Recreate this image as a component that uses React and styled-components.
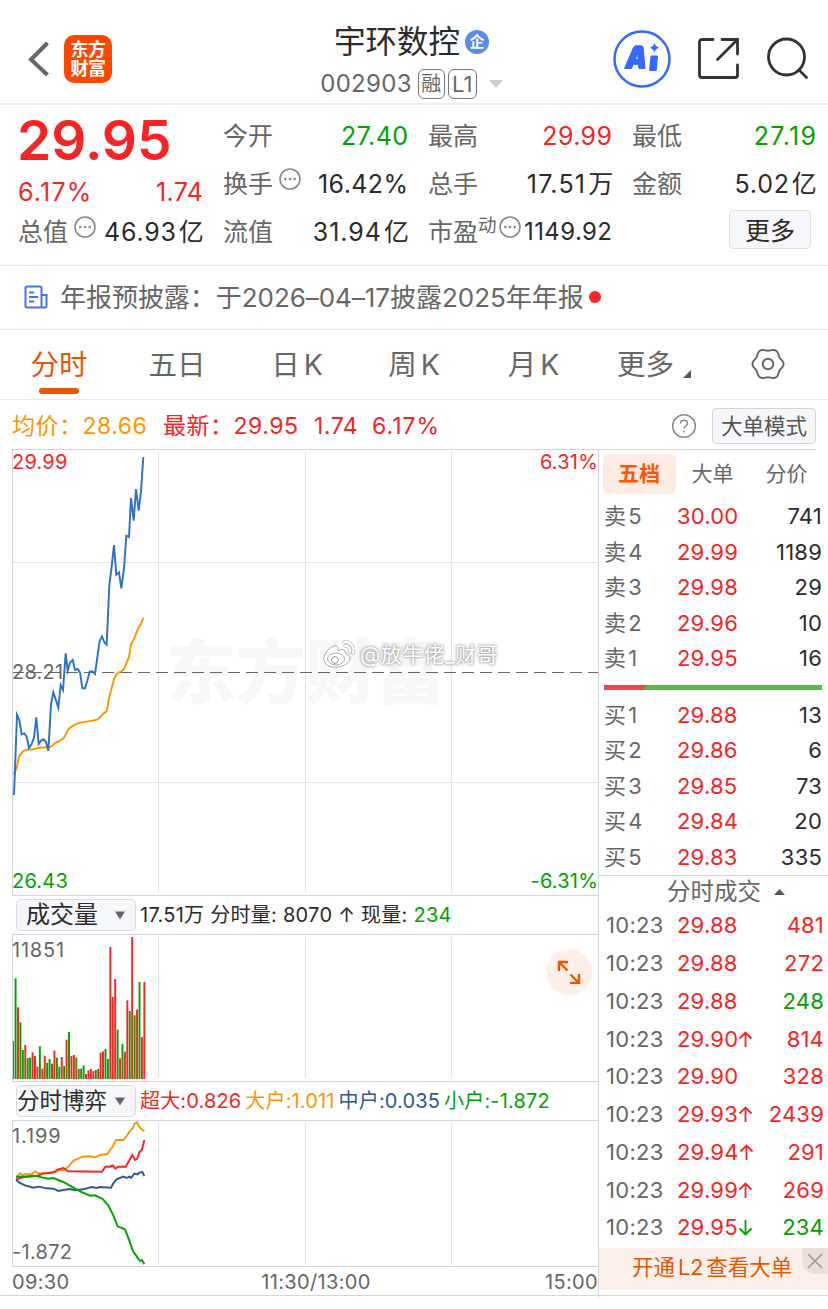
import React from 'react';
import styled, { createGlobalStyle } from 'styled-components';

const RED = '#f82323';
const GREEN = '#00a300';
const ORANGE = '#ff9500';
const BLUE = '#2f5597';
const BRAND = '#ea5504';
const GREY = '#666';
const DARK = '#2b2b2b';
const LINE = '#d3d5da';

const GlobalStyle = createGlobalStyle`
    * {
        box-sizing: border-box;
    }
    body {
        margin: 0;
        background: #fff;
        color: ${DARK};
        font-family: Inter, "Noto Sans CJK SC", sans-serif;
        font-weight: 400;
    }
`;

const Screen = styled.div`
    width: 828px;
    height: 1309px;
    overflow: hidden;
    background: #fff;
    white-space: nowrap;
`;

/* ---------- header ---------- */

const Header = styled.header`
    display: grid;
    grid-template-columns: 250px 1fr 250px;
    height: 105px;
    border-bottom: 2px solid #ededed;
`;

const HeaderLeft = styled.div`
    display: flex;
    align-items: center;
    gap: 13px;
    padding: 14px 0 0 28px;
`;

const Logo = styled.div`
    width: 48px;
    height: 48px;
    padding-top: 5px;
    border-radius: 10px;
    background: #ff4700;
    color: #fff;
    font-size: 18px;
    font-weight: 700;
    line-height: 19px;
    text-align: center;
    letter-spacing: -0.4px;
`;

const HeaderTitle = styled.div`
    display: flex;
    flex-direction: column;
    align-items: center;
    padding: 22px 5px 0 0;
`;

const NameRow = styled.div`
    display: flex;
    align-items: center;
    height: 40px;
    gap: 5px;
    font-size: 31.5px;
    line-height: 40px;
`;

const Certified = styled.span`
    width: 24px;
    height: 24px;
    border-radius: 50%;
    background: #5b8bea;
    color: #fff;
    font-size: 15px;
    font-weight: 700;
    line-height: 23px;
    text-align: center;
`;

const CodeRow = styled.div`
    display: flex;
    align-items: center;
    height: 31px;
    margin-top: 6px;
    color: ${GREY};
    font-size: 24px;
    letter-spacing: 0.3px;
`;

const Tag = styled.span`
    width: ${props => props.$width}px;
    height: 30px;
    margin-left: ${props => props.$gap}px;
    border: 1px solid #777;
    border-radius: 6px;
    font-size: ${props => props.$size}px;
    line-height: 29px;
    letter-spacing: 0;
    text-align: center;
`;

const HeaderRight = styled.div`
    display: flex;
    align-items: center;
    padding: 14px 0 0 35px;
`;

/* ---------- quote ---------- */

const Quote = styled.section`
    display: grid;
    grid-template-columns: 185px 185px 184px 184px;
    column-gap: 20px;
    height: 161px;
    padding: 7px 0 0 18px;
    border-bottom: 1px solid #e8e8e8;
`;

const QuoteColumn = styled.div`
    display: flex;
    flex-direction: column;
`;

const QuoteRow = styled.div`
    display: flex;
    align-items: center;
    justify-content: space-between;
    height: 48px;
    color: ${props => props.$color || DARK};
    font-size: 25px;
    line-height: 48px;
`;

const Value = styled.span`
    margin-right: -${props => props.$spacing || 0.4}px;
    font-size: ${props => props.$size || 25}px;
    letter-spacing: ${props => props.$spacing || 0.4}px;
`;

const Unit = styled.span`
    margin-left: 2px;
    letter-spacing: 0;
`;

const Price = styled.div`
    height: 62px;
    margin-left: -1px;
    color: ${RED};
    font-size: 55px;
    font-weight: 600;
    line-height: 56px;
`;

const Change = styled(QuoteRow)`
    height: 34px;
    padding-top: 1px;
    line-height: 34px;
`;

const Label = styled.span`
    display: flex;
    color: ${GREY};
`;

const Sup = styled.sup`
    font-size: 18.5px;
    line-height: 34px;
`;

const MoreButton = styled.div`
    align-self: flex-end;
    width: 82px;
    height: 39px;
    margin: 2px 5px 0 0;
    border: 1px solid #dcdfe6;
    border-radius: 4px;
    background: #f6f7fa;
    font-size: 25px;
    line-height: 40px;
    text-align: center;
`;

/* ---------- notice ---------- */

const Notice = styled.section`
    display: flex;
    align-items: center;
    height: 64px;
    padding-left: 24px;
    border-bottom: 1px solid #e8e8e8;
    color: ${GREY};
    font-size: 26px;
    line-height: 62px;
`;

const NoticeText = styled.span`
    margin-left: 12px;
    letter-spacing: -0.04px;
`;

const Dot = styled.i`
    width: 12px;
    height: 12px;
    margin: -1px 0 0 5px;
    border-radius: 50%;
    background: ${RED};
`;

/* ---------- period tabs ---------- */

const Tabs = styled.nav`
    display: flex;
    height: 70px;
    border-bottom: 1px solid #e8e8e8;
`;

const Tab = styled.div`
    display: flex;
    flex-direction: column;
    align-items: center;
    width: ${props => props.$width}px;
    padding-top: 15px;
    color: ${props => (props.$active ? BRAND : GREY)};
    font-size: 28.5px;
    line-height: 40px;
    word-spacing: -4px;

    &::after {
        content: '';
        display: ${props => (props.$active ? 'block' : 'none')};
        width: 40px;
        height: 6px;
        margin-top: 3px;
        border-radius: 3px;
        background: ${BRAND};
    }
`;

const TabMore = styled.span`
    display: flex;
    align-items: flex-end;
    gap: 9px;
`;

/* ---------- legend ---------- */

const Legend = styled.section`
    display: flex;
    align-items: center;
    height: 49px;
    padding: 2px 12px 0;
    font-size: 23px;
    line-height: 46px;
    letter-spacing: 0.5px;
`;

const LegendItem = styled.span`
    width: ${props => props.$width}px;
    color: ${props => props.$color};
    letter-spacing: ${props => props.$spacing || 0.5}px;
`;

const ModeButton = styled.span`
    width: 104px;
    height: 36px;
    margin-left: 15px;
    border: 1px solid #cfd3de;
    border-radius: 4px;
    background: #f6f7fa;
    color: #555;
    font-size: 21.5px;
    line-height: 34px;
    letter-spacing: 0;
    text-align: center;
`;

/* ---------- body ---------- */

const Body = styled.main`
    display: grid;
    grid-template-columns: 599px 229px;
    height: 847px;
    border-bottom: 1px solid ${LINE};
`;

const Charts = styled.div`
    padding-left: 12px;
    border-right: 1px solid ${LINE};
`;

const Panel = styled.div`
    position: relative;
    height: ${props => props.$height}px;
    border-top: 1px solid ${LINE};
    border-bottom: 1px solid ${LINE};
    border-left: 1px solid ${LINE};

    svg {
        display: block;
    }
`;

const ChartLabel = styled.span`
    position: absolute;
    ${props => (props.$right ? 'right: 0;' : 'left: -1px;')}
    top: ${props => props.$top}px;
    color: ${props => props.$color || GREY};
    font-size: 20px;
    line-height: 24px;
    letter-spacing: ${props => props.$spacing || 0.2}px;
`;

const Indicator = styled.div`
    display: flex;
    align-items: center;
    height: 38px;
    padding-left: 4px;
    font-size: 20px;
    line-height: 36px;
    letter-spacing: ${props => props.$spacing}px;
`;

const Select = styled.div`
    display: flex;
    align-items: center;
    justify-content: space-between;
    width: 120px;
    height: 32px;
    margin-right: 4px;
    padding: 0 10px 0 ${props => props.$pad}px;
    border: 1px solid #d9dce4;
    border-radius: 4px;
    background: #f6f7fa;
    font-size: ${props => props.$size}px;
    line-height: 32px;
    letter-spacing: 0;
`;

const Colored = styled.span`
    color: ${props => props.$color};
    margin-right: ${props => props.$gap || 0}px;
`;

const Expand = styled.div`
    position: absolute;
    top: 14px;
    right: 6px;
    display: flex;
    align-items: center;
    justify-content: center;
    width: 46px;
    height: 46px;
    border-radius: 50%;
    background: #fef0e9;
`;

const TimeAxis = styled.div`
    display: grid;
    grid-template-columns: 1fr auto 1fr;
    align-items: center;
    height: 30px;
    color: ${GREY};
    font-size: 20px;
    letter-spacing: 0.35px;

    span:nth-child(2) {
        margin-left: 22px;
    }
    span:last-child {
        text-align: right;
    }
`;

const Watermark = styled.div`
    position: absolute;
    top: 185px;
    left: 309px;
    display: flex;
    align-items: center;
    gap: 2px;
    color: #fff;
    font-size: 21px;
    line-height: 40px;
    letter-spacing: 0.5px;
    text-shadow: 0 0 2px #999, 0 0 3px #aaa, 0 0 4px #ccc;
`;

/* ---------- order book ---------- */

const Side = styled.aside`
    display: flex;
    flex-direction: column;
`;

const BookTabs = styled.div`
    display: flex;
    height: 50px;
    padding: 4px 0 0 4px;
    border-top: 1px solid ${LINE};
    margin-right: 12px;
`;

const BookTab = styled.div`
    flex: none;
    width: ${props => (props.$active ? 73 : 74)}px;
    height: 40px;
    border-radius: 6px;
    background: ${props => (props.$active ? '#feece3' : 'none')};
    color: ${props => (props.$active ? '#ff5500' : GREY)};
    font-size: 21px;
    font-weight: ${props => (props.$active ? 700 : 400)};
    line-height: 40px;
    text-align: center;
    text-indent: -1px;
`;

const BookRow = styled.div`
    display: grid;
    grid-template-columns: 73px 1fr auto;
    align-items: center;
    height: 35.5px;
    padding: 0 6px 0 5px;
    font-size: 22px;
    letter-spacing: 0.2px;
    line-height: 35px;
`;

const Level = styled.span`
    color: ${GREY};
    word-spacing: -4px;
    letter-spacing: ${props => props.$spacing || 0}px;
`;

const Ratio = styled.div`
    flex: none;
    height: 5px;
    margin: 8px 6px 8px 5px;
    background: linear-gradient(125deg, #ee4848 0 35px, #5bb946 35px);
`;

const DealsTitle = styled.div`
    display: flex;
    align-items: center;
    gap: 13px;
    height: 32px;
    padding-left: 68px;
    border-top: 1px solid ${LINE};
    color: ${GREY};
    font-size: 23.5px;
    line-height: 32px;
`;

const DealRow = styled(BookRow)`
    height: 37.75px;
    padding: 0 4px 0 7px;
    grid-template-columns: 71px 1fr auto;
`;

const Banner = styled.div`
    display: flex;
    justify-content: space-between;
    height: 42px;
    margin-top: 1px;
    padding-left: 33px;
    background: #fdf0ea;
    color: ${BRAND};
    font-size: 21.5px;
    line-height: 39px;
    word-spacing: -3px;
`;

const Close = styled.span`
    display: flex;
    align-items: center;
    justify-content: center;
    width: 26px;
    height: 26px;
    border-bottom-left-radius: 13px;
    background: #ecdfda;
`;

const volumes = [
    ['g', 453], ['g', 265], ['r', 352], ['g', 397], ['g', 480], ['r', 465], ['g', 504], ['g', 503], ['r', 487],
    ['r', 498], ['r', 530], ['g', 469], ['r', 536], ['r', 497], ['g', 519], ['g', 507], ['r', 521], ['r', 482],
    ['g', 503], ['g', 530], ['r', 501], ['g', 528], ['r', 449], ['g', 426], ['r', 498], ['r', 495], ['g', 503],
    ['r', 537], ['g', 536], ['g', 526], ['r', 552], ['r', 541], ['r', 537], ['r', 543], ['g', 540], ['r', 537],
    ['r', 488], ['r', 484], ['g', 477], ['g', 507], ['r', 171], ['r', 321], ['r', 267], ['g', 419], ['r', 505],
    ['g', 462], ['r', 485], ['r', 331], ['g', 363], ['r', 141], ['g', 376], ['r', 359], ['g', 276], ['r', 441],
    ['r', 276],
];

const sells = [
    ['卖 5', '30.00', 741], ['卖 4', '29.99', 1189], ['卖 3', '29.98', 29], ['卖 2', '29.96', 10], ['卖 1', '29.95', 16],
];

const buys = [
    ['买 1', '29.88', 13], ['买 2', '29.86', 6], ['买 3', '29.85', 73], ['买 4', '29.84', 20], ['买 5', '29.83', 335],
];

const deals = [
    ['29.88', '', 481, RED],
    ['29.88', '', 272, RED],
    ['29.88', '', 248, GREEN],
    ['29.90', 'up', 814, RED],
    ['29.90', '', 328, RED],
    ['29.93', 'up', 2439, RED],
    ['29.94', 'up', 291, RED],
    ['29.99', 'up', 269, RED],
    ['29.95', 'down', 234, GREEN],
];

const pricePoints = '42,1065 45,990 51,824 58,840 65,883 73,880 80,890 87,924 95,912 102,893 109,832 116,912 123,902 130,898 138,906 145,932 153,793 160,757 167,778 175,803 182,735 189,750 197,640 203,692 210,668 218,660 225,690 233,687 240,697 247,745 255,745 262,722 269,695 277,694 285,702 292,652 299,603 306,589 313,607 320,614 328,435 335,380 342,315 349,404 357,397 364,445 372,385 379,287 387,291 393,174 401,242 408,147 416,212 423,155 430,51';
const averagePoints = '40,1003 47,990 51,980 57,950 65,938 73,931 80,929 100,928 115,924 145,921 153,920 165,909 175,905 182,900 190,895 197,884 204,869 212,862 225,853 240,848 265,844 292,839 300,831 310,821 320,814 327,775 335,743 343,714 349,704 357,697 365,693 372,687 379,670 387,651 393,614 401,598 408,582 416,561 423,553 430,533';

const flows = [
    [ORANGE, '48,290 55,287 61,280 68,287 75,283 95,283 105,274 115,280 150,279 165,276 175,271 190,270 203,262 213,250 222,241 235,236 248,230 270,229 285,232 300,225 322,222 330,210 338,200 348,180 370,180 380,168 390,153 398,145 404,131 411,127 418,140 426,149 433,153'],
    [RED, '48,298 60,294 80,290 110,288 130,281 160,277 175,268 190,264 204,274 306,275 316,260 330,260 338,256 346,266 355,260 377,260 385,246 390,238 397,225 405,240 412,236 418,217 426,209 433,180'],
    [BLUE, '48,299 58,308 75,316 100,323 115,320 140,325 160,326 175,333 190,330 210,327 225,331 250,328 275,321 290,324 300,321 333,323 340,310 350,298 370,290 380,294 388,290 393,294 403,281 412,283 418,278 427,276 433,288'],
    [GREEN, '48,290 75,290 100,287 115,290 145,296 160,294 190,306 215,320 240,334 270,347 285,346 308,357 325,377 340,406 353,439 375,448 390,487 398,512 412,532 420,543 426,540 433,553'],
];

// outline of the settings gear, six soft lobes
const gearPoints = Array.from({ length: 72 }, (_, i) => {
    const a = (i * Math.PI) / 36;
    const r = 14.4 + 1.15 * Math.cos(6 * a);
    return `${(17 + r * Math.cos(a)).toFixed(2)},${(16 + r * Math.sin(a)).toFixed(2)}`;
}).join(' ');

const Hint = ({ shift }) => (
    <svg width="22" height="22" viewBox="0 0 22 22" style={{ marginTop: 8, marginLeft: shift }}>
        <circle cx="11" cy="11" r="10" fill="none" stroke="#888" strokeWidth="1.6" />
        <circle cx="6.3" cy="11" r="1.3" fill="#888" />
        <circle cx="11" cy="11" r="1.3" fill="#888" />
        <circle cx="15.7" cy="11" r="1.3" fill="#888" />
    </svg>
);

const Grid = ({ height }) => (
    <g stroke="#e1e2ec" strokeWidth="1">
        {[145.5, 292.5, 438.5].map(x => <line key={x} x1={x} x2={x} y1="2" y2={height - 3} />)}
    </g>
);

const Caret = () => (
    <svg width="10" height="9" viewBox="0 0 10 9"><path d="M0 0.5h10L5 8.5z" fill="#666" /></svg>
);

const Arrow = ({ down }) => (
    <svg width="15" height="17" viewBox="0 0 15 17" fill="none" stroke={down ? GREEN : RED} strokeWidth="1.8" style={{ verticalAlign: -1 }}>
        <path d={down ? 'M7.5 1v14M1.5 9.5l6 6 6-6' : 'M7.5 16V2M1.5 7.5l6-6 6 6'} />
    </svg>
);

const Lines = styled.svg`
    position: absolute;
    top: 0;
    left: 0;
`;

const TopBar = () => (
    <Header>
        <HeaderLeft>
            <svg width="23" height="36" viewBox="0 0 23 36" fill="none" stroke="#666" strokeWidth="4">
                <path d="M19.500 2L3 18.500 19.500 34" />
            </svg>
            <Logo>东方<br />财富</Logo>
        </HeaderLeft>
        <HeaderTitle>
            <NameRow>宇环数控<Certified>企</Certified></NameRow>
            <CodeRow>
                002903
                <Tag $width={27} $gap={6} $size={20}>融</Tag>
                <Tag $width={29} $gap={3} $size={22}>L1</Tag>
                <svg width="14" height="8" viewBox="0 0 14 8" style={{ marginLeft: 12 }}><path d="M0 0h14L7 8z" fill="#ccc" /></svg>
            </CodeRow>
        </HeaderTitle>
        <HeaderRight>
            <svg width="58" height="58" viewBox="0 0 58 58" fill="#3568ff">
                <circle cx="29" cy="29" r="27.500" fill="none" stroke="#3568ff" strokeWidth="2.500" />
                <g stroke="#3568ff" strokeLinejoin="round">
                    <path
                        d="M11.500 38.500L20.500 17.500q.8-1.700 2.500-1.700h5q2 0 2.200 2L32 38.500h-6l-.4-4.200h-5.400l-1.700 4.200zM22.300 29.300h2.900l-.5-6z"
                        fillRule="evenodd"
                        strokeWidth="1"
                    />
                    <path d="M38.500 26.500h5.500l-1.200 13.500h-5.800z" strokeWidth="2" />
                </g>
                <path d="M41.500 13q1 3.700 4.700 4.700-3.700 1-4.700 4.700-1-3.700-4.700-4.700 3.700-1 4.700-4.700z" />
            </svg>
            <svg width="41" height="41" viewBox="0 0 41 41" fill="none" stroke="#333" strokeWidth="2.800" strokeLinecap="round" style={{ marginLeft: 27 }}>
                <path d="M15 1.500H4a2.500 2.500 0 0 0-2.500 2.500v33A2.500 2.500 0 0 0 4 39.500h33a2.500 2.500 0 0 0 2.500-2.500V27M24 1.500h15.500V16M39 2L19.500 21.500" />
            </svg>
            <svg width="43" height="43" viewBox="0 0 43 43" fill="none" stroke="#333" strokeWidth="2.800" strokeLinecap="round" style={{ marginLeft: 27 }}>
                <circle cx="20.500" cy="20" r="18" />
                <path d="M33 33l7.500 7.500" />
            </svg>
        </HeaderRight>
    </Header>
);

const QuoteBoard = () => (
    <Quote>
        <QuoteColumn>
            <Price>29.95</Price>
            <Change $color={RED}><Value $spacing={1.2}>6.17%</Value><Value>1.74</Value></Change>
            <QuoteRow><Label>总值<Hint shift={6} /></Label><Value $spacing={0.8}>46.93<Unit>亿</Unit></Value></QuoteRow>
        </QuoteColumn>
        <QuoteColumn>
            <QuoteRow $color={GREEN}><Label>今开</Label><Value>27.40</Value></QuoteRow>
            <QuoteRow><Label>换手<Hint shift={6} /></Label><Value>16.42%</Value></QuoteRow>
            <QuoteRow><Label>流值</Label><Value $spacing={1}>31.94<Unit>亿</Unit></Value></QuoteRow>
        </QuoteColumn>
        <QuoteColumn>
            <QuoteRow $color={RED}><Label>最高</Label><Value>29.99</Value></QuoteRow>
            <QuoteRow><Label>总手</Label><Value $spacing={1.2}>17.51<Unit>万</Unit></Value></QuoteRow>
            <QuoteRow><Label>市盈<Sup>动</Sup><Hint shift={2} /></Label><Value $size={24}>1149.92</Value></QuoteRow>
        </QuoteColumn>
        <QuoteColumn>
            <QuoteRow $color={GREEN}><Label>最低</Label><Value $spacing={1.3}>27.19</Value></QuoteRow>
            <QuoteRow><Label>金额</Label><Value $spacing={0.8}>5.02<Unit>亿</Unit></Value></QuoteRow>
            <MoreButton>更多</MoreButton>
        </QuoteColumn>
    </Quote>
);

const PeriodTabs = () => (
    <Tabs>
        <Tab $width={118} $active>分时</Tab>
        <Tab $width={118}>五日</Tab>
        <Tab $width={122}>日 K</Tab>
        <Tab $width={112}>周 K</Tab>
        <Tab $width={127}>月 K</Tab>
        <Tab $width={114}>
            <TabMore>
                更多
                <svg width="8" height="8" viewBox="0 0 8 8" style={{ marginBottom: 7 }}><path d="M8 0v8H0z" fill="#555" /></svg>
            </TabMore>
        </Tab>
        <Tab $width={114}>
            <svg width="34" height="32" viewBox="0 0 34 32" fill="none" stroke="#666" strokeWidth="1.900" strokeLinejoin="round" style={{ marginTop: 3 }}>
                <polygon points={gearPoints} />
                <circle cx="17" cy="16" r="5.300" />
            </svg>
        </Tab>
    </Tabs>
);

const PriceChart = () => (
    <Panel $height={447}>
        <svg width="585" height="445" viewBox="0 0 585 445">
            <text x="153" y="248" fontSize="70" fontWeight="900" fill="#f7f7f7">东方财富</text>
            <Grid height={445} />
            <g stroke="#e1e2ec">
                <line x1="0" x2="585" y1="112.500" y2="112.500" />
                <line x1="0" x2="585" y1="332.500" y2="332.500" />
            </g>
            <line x1="-1" x2="585" y1="222.500" y2="222.500" stroke="#666" strokeDasharray="12 6" />
        </svg>
        <ChartLabel $top={0} $color={RED}>29.99</ChartLabel>
        <ChartLabel $top={0} $color={RED} $right>6.31%</ChartLabel>
        <ChartLabel $top={210}>28.21</ChartLabel>
        <ChartLabel $top={419} $color={GREEN}>26.43</ChartLabel>
        <ChartLabel $top={419} $color={GREEN} $right>-6.31%</ChartLabel>
        <Lines width="585" height="445" viewBox="0 0 585 445">
            <g transform="translate(-13 -10) scale(0.33333)" fill="none" strokeWidth="5.800">
                <polyline points={averagePoints} stroke={ORANGE} />
                <polyline points={pricePoints} stroke="#2e72c4" strokeMiterlimit="6" />
            </g>
        </Lines>
        <Watermark>
            <svg width="36" height="32" viewBox="0 0 36 32" fill="none" stroke="#aaa" strokeWidth="1">
                <path d="M12 7C6 9 1 16 2 21c1 6 8 8 14 7 7-1 12-5 12-9 0-3-3-4-5-5 1-3-2-5-7-2 1-4-1-6-4-5z" fill="#fff" />
                <ellipse cx="14" cy="20" rx="8.500" ry="6" fill="#fff" />
                <circle cx="13" cy="21" r="3.500" stroke="#999" />
                <path d="M22 3c6-1 11 5 9 11M23 7c4 0 6 3 5 6" stroke="#bbb" strokeWidth="3.500" strokeLinecap="round" />
                <path d="M22 3c6-1 11 5 9 11M23 7c4 0 6 3 5 6" stroke="#fff" strokeWidth="2" strokeLinecap="round" />
            </svg>
            @放牛佬_财哥
        </Watermark>
    </Panel>
);

const VolumeChart = () => (
    <Panel $height={148}>
        <svg width="585" height="146" viewBox="0 0 585 146">
            <Grid height={146} />
            <g transform="translate(-13 -45) scale(0.33333)">
                {volumes.map(([type, top], i) => (
                    <rect
                        key={i}
                        x={i === 0 ? 39 : 36.5 + i * 7.29}
                        y={top}
                        width={i === 0 ? 3 : 5.8}
                        height={567 - top}
                        fill={type === 'r' ? RED : GREEN}
                    />
                ))}
            </g>
        </svg>
        <ChartLabel $top={3} $spacing={0.8}>11851</ChartLabel>
        <Expand>
            <svg width="24" height="24" viewBox="0 0 24 24" fill="none" stroke={BRAND} strokeWidth="2.400">
                <path d="M2 11V2h9M2.500 2.500l8 8M22 14v9h-9M21.500 22.500l-8-8" />
            </svg>
        </Expand>
    </Panel>
);

const FlowChart = () => (
    <Panel $height={147}>
        <svg width="585" height="145" viewBox="0 0 585 145">
            <Grid height={147} />
        </svg>
        <ChartLabel $top={3} $spacing={0.9}>1.199</ChartLabel>
        <ChartLabel $top={119} $spacing={0.3}>-1.872</ChartLabel>
        <Lines width="585" height="145" viewBox="0 0 585 145">
            <g transform="translate(-13 -41) scale(0.33333)" fill="none" strokeWidth="5.800">
                {flows.map(([color, points]) => <polyline key={color} points={points} stroke={color} />)}
            </g>
        </Lines>
    </Panel>
);

const OrderBook = () => (
    <Side>
        <BookTabs>
            <BookTab $active>五档</BookTab>
            <BookTab>大单</BookTab>
            <BookTab>分价</BookTab>
        </BookTabs>
        {sells.map(([level, price, amount]) => (
            <BookRow key={level}><Level>{level}</Level><Colored $color={RED}>{price}</Colored><span>{amount}</span></BookRow>
        ))}
        <Ratio />
        {buys.map(([level, price, amount]) => (
            <BookRow key={level}><Level>{level}</Level><Colored $color={RED}>{price}</Colored><span>{amount}</span></BookRow>
        ))}
        <DealsTitle>
            分时成交
            <svg width="11" height="6" viewBox="0 0 11 6"><path d="M5.500 0L11 6H0z" fill="#555" /></svg>
        </DealsTitle>
        {deals.map(([price, trend, amount, color], i) => (
            <DealRow key={i}>
                <Level $spacing={0.3}>10:23</Level>
                <Colored $color={RED}>{price}{trend && <Arrow down={trend === 'down'} />}</Colored>
                <Colored $color={color}>{amount}</Colored>
            </DealRow>
        ))}
        <Banner>
            开通 L2 查看大单
            <Close>
                <svg width="16" height="16" viewBox="0 0 16 16" stroke="#999" strokeWidth="1.600"><path d="M1 1l14 14M15 1L1 15" /></svg>
            </Close>
        </Banner>
    </Side>
);

const App = () => (
    <Screen>
        <GlobalStyle />
        <TopBar />
        <QuoteBoard />
        <Notice>
            <svg width="24" height="24" viewBox="0 0 24 24" fill="none" stroke="#4273f6" strokeWidth="2" style={{ marginTop: -2 }}>
                <path d="M18 22.500H3a1.500 1.500 0 0 1-1.500-1.500V3A1.500 1.500 0 0 1 3 1.500h13A1.500 1.500 0 0 1 17.500 3v18a1.500 1.500 0 0 0 1.500 1.500h2a1.500 1.500 0 0 0 1.500-1.500V10H18M5 7.500h5M5 12h9M5 16.500h5" />
            </svg>
            <NoticeText>年报预披露：于2026–04–17披露2025年年报</NoticeText>
            <Dot />
        </Notice>
        <PeriodTabs />
        <Legend>
            <LegendItem $color={ORANGE} $width={151}>均价：28.66</LegendItem>
            <LegendItem $color={RED} $width={151}>最新：29.95</LegendItem>
            <LegendItem $color={RED} $width={58}>1.74</LegendItem>
            <LegendItem $color={RED} $width={299} $spacing={1}>6.17%</LegendItem>
            <svg width="26" height="26" viewBox="0 0 26 26" fill="none" stroke="#888" strokeWidth="1.500">
                <circle cx="13" cy="13" r="11.300" />
                <path d="M9.500 10.500c0-4.500 7-4.500 7 0 0 2.300-3.500 2.700-3.500 5M13 17.500v2" />
            </svg>
            <ModeButton>大单模式</ModeButton>
        </Legend>
        <Body>
            <Charts>
                <PriceChart />
                <Indicator $spacing={0.27}>
                    <Select $pad={9} $size={24}>成交量<Caret /></Select>
                    17.51万 分时量: 8070 ↑ 现量:&nbsp;<Colored $color={GREEN}>234</Colored>
                </Indicator>
                <VolumeChart />
                <Indicator $spacing={0.15}>
                    <Select $pad={0} $size={22.5}>分时博弈<Caret /></Select>
                    <Colored $color={RED} $gap={4}>超大:0.826</Colored>
                    <Colored $color={ORANGE} $gap={4}>大户:1.011</Colored>
                    <Colored $color={BLUE} $gap={4}>中户:0.035</Colored>
                    <Colored $color={GREEN}>小户:-1.872</Colored>
                </Indicator>
                <FlowChart />
                <TimeAxis><span>09:30</span><span>11:30/13:00</span><span>15:00</span></TimeAxis>
            </Charts>
            <OrderBook />
        </Body>
    </Screen>
);

export default App;
